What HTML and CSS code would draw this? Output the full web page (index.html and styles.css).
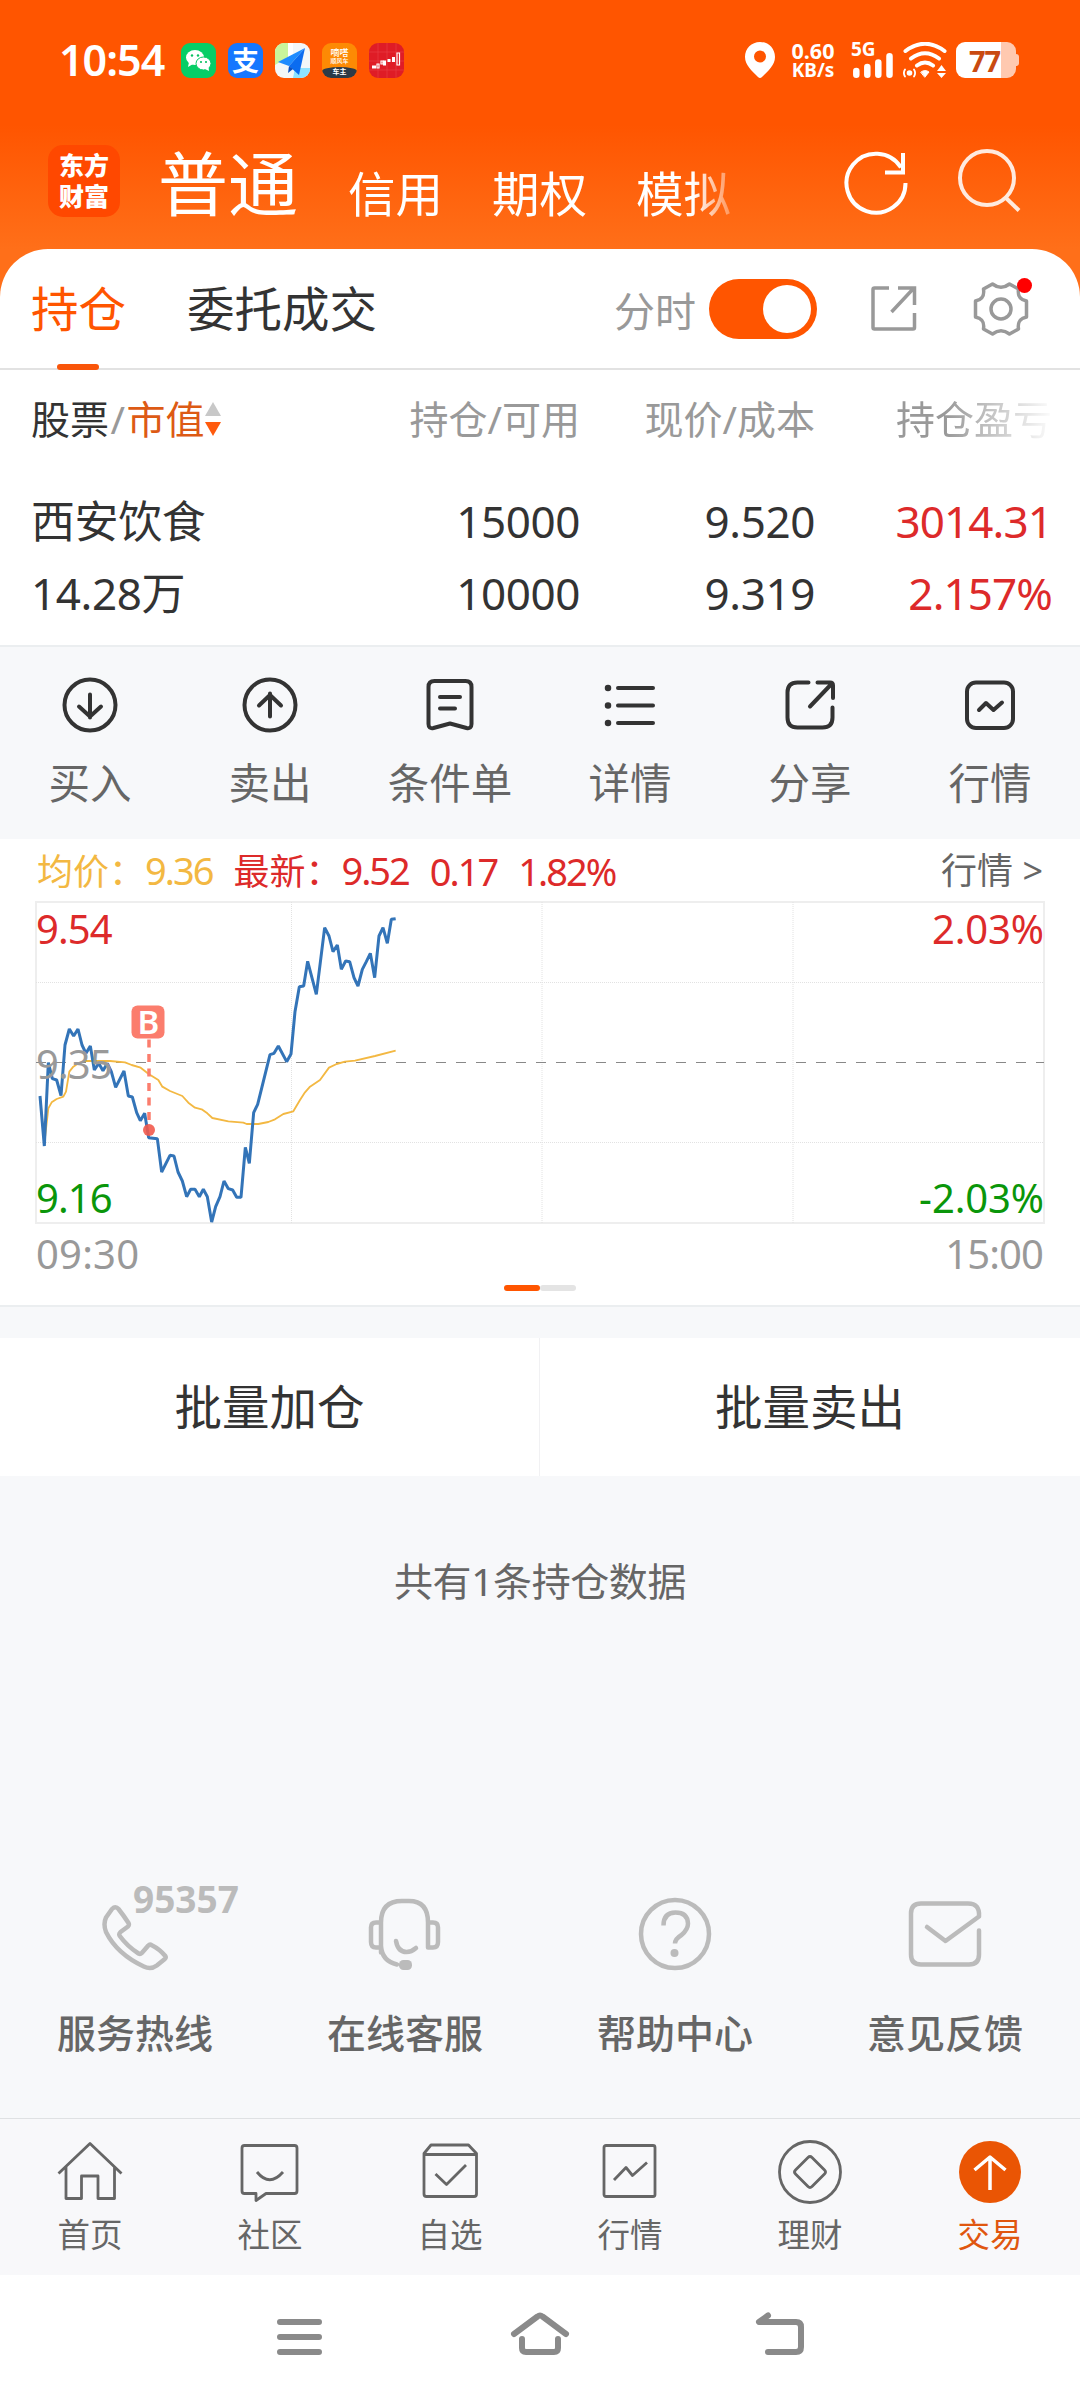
FILE: index.html
```html
<!DOCTYPE html>
<html lang="zh-CN">
<head>
<meta charset="utf-8">
<title>持仓</title>
<link rel="stylesheet" href="styles.css">
</head>
<body>
<div class="screen">
  <div class="status">
    <div class="status-left">
      <span class="clock">10:54</span>
      <span class="app app-wechat"><svg width="35" height="35" viewBox="0 0 35 35"><ellipse cx="14" cy="14.500" rx="9" ry="7.500" fill="#fff"/><path d="M8 19l-1 5 5-3z" fill="#fff"/><circle cx="11" cy="12.500" r="1.200" fill="#07c160"/><circle cx="17" cy="12.500" r="1.200" fill="#07c160"/><ellipse cx="22.500" cy="20.500" rx="7.500" ry="6.500" fill="#fff" stroke="#0acb66"/><path d="M24 26l4 2-.500-4z" fill="#fff"/><circle cx="20" cy="19" r="1.100" fill="#07c160"/><circle cx="25" cy="19" r="1.100" fill="#07c160"/></svg></span>
      <span class="app app-pay">支</span>
      <span class="app app-map"><svg width="35" height="35" viewBox="0 0 35 35"><path d="M0 0h13v14L0 22z" fill="#c9f59b"/><path d="M13 0h5v12l-5 6z" fill="#fff"/><path d="M20 25h15v10H18z" fill="#8fe3ff"/><path d="M30 5L3 19l11 4z" fill="#1d8bff"/><path d="M30 5L14 23l10 9z" fill="#0b6cf0"/><path d="M14 23l-1 7 5-4z" fill="#0a50c0"/></svg></span>
      <span class="app app-ride"><b>嘀嗒</b><b>顺风车</b><i>车主</i></span>
      <span class="app app-stock"><svg width="35" height="35" viewBox="0 0 35 35"><path d="M0 9h35M0 18h35M0 27h35M9 0v35M18 0v35M27 0v35" stroke="#e8474c" stroke-width=".5"/><path d="M3 24h4M15.500 17.500v5M20 16v3M24.500 14v5" stroke="#fff" stroke-width="3"/><path d="M8 21h2v4H8zM12 18h2v3h-2zM28 10h2.500v12H28z" fill="none" stroke="#fff" stroke-width="1.200"/></svg></span>
    </div>
    <div class="status-right">
      <svg class="pin" width="30" height="36" viewBox="0 0 30 36"><path fill="#fff" fill-rule="evenodd" d="M15 0C6.500 0 0 6.500 0 15c0 8 7 14 13 20q2 2 4 0c6-6 13-12 13-20C30 6.500 23.500 0 15 0zm0 8.500a6 6 0 110 12 6 6 0 010-12z"/></svg>
      <span class="speed"><b>0.60</b><b>KB/s</b></span>
      <span class="signal"><b>5G</b><svg width="40" height="25" viewBox="0 0 40 25" stroke="#fff" stroke-width="6.500" stroke-linecap="round"><path d="M3.300 18v3.700M14.300 14v7.700M25.300 9.500v12.200M36.500 3.300v18.400"/></svg></span>
      <svg class="wifi" width="44" height="36" viewBox="0 0 44 36" fill="none" stroke="#fff" stroke-width="4" stroke-linecap="round"><path d="M2.500 9Q22-5.500 41.500 9M8 16.500Q22 6 36 16.500M14 23.500q8-6 16 0"/><path d="M18 30q4-3 8 0l-4 5z" fill="#fff" stroke-width="1"/><circle cx="6.500" cy="31" r="2.800" fill="#fff" stroke="none"/><path d="M2 27.500q-2.200 3.500 0 7M11 27.500q2.200 3.500 0 7" stroke-width="1.800"/><path d="M34 29h9l-4.500-6zM34 31h9l-4.500 5z" fill="#fff" stroke="none"/></svg>
      <span class="battery"><b>77</b></span>
    </div>
  </div>

  <header class="head">
    <div class="logo"><span>东方</span><span>财富</span></div>
    <nav class="modes"><span class="mode-on">普通</span><span>信用</span><span>期权</span><span>模拟</span></nav>
    <svg class="refresh" width="64" height="68" viewBox="0 0 64 68" fill="none" stroke="#fff" stroke-width="4"><path d="M61.500 36A29.500 29.500 0 1 1 57 20.500"/><path d="M59 6v19.500H41"/></svg>
    <svg width="66" height="68" viewBox="0 0 66 68" fill="none" stroke="#ffeade" stroke-width="4"><circle cx="31" cy="31" r="27"/><path d="M49 50l14 13.500"/></svg>
  </header>

  <section class="panel-tabs">
    <span class="ptab ptab-on">持仓</span>
    <span class="ptab">委托成交</span>
    <span class="spark-label">分时</span>
    <span class="toggle"></span>
    <svg class="share" width="48" height="48" viewBox="0 0 48 48" fill="none" stroke="#999" stroke-width="3.500"><path d="M19 3H4.500Q3 3 3 4.500v38Q3 44 4.500 44H43q1.500 0 1.500-1.500V28"/><path d="M28 3h16.500v17M43 4L21.500 27"/></svg>
    <span class="gear"><svg width="56" height="56" viewBox="0 0 56 56" fill="none" stroke="#999" stroke-width="3.500" stroke-linejoin="round"><path d="M19.500 3L10.500 8C11.500 15 9.500 18.500 2.500 20v16C9.500 37.500 11.500 41 10.500 48l9 5Q28 46.500 36.500 53l9-5C44.500 41 46.500 37.500 53.500 36V20C46.500 18.500 44.500 15 45.500 8l-9-5Q28 9.500 19.500 3z"/><circle cx="28" cy="28" r="10"/></svg></span>
  </section>

  <section class="table">
    <div class="thead">
      <span class="c1"><em>股票</em><u>/</u><strong>市值</strong><svg width="16" height="34" viewBox="0 0 16 34"><path d="M8 0l8 14H0z" fill="#c8c8c8"/><path d="M8 34l8-14H0z" fill="#ff5a0d"/></svg></span>
      <span>持仓/可用</span><span>现价/成本</span><span class="fade">持仓盈亏</span>
    </div>
    <div class="trow"><span class="c1">西安饮食</span><span>15000</span><span>9.520</span><span class="red">3014.31</span></div>
    <div class="trow"><span class="c1">14.28万</span><span>10000</span><span>9.319</span><span class="red">2.157%</span></div>
  </section>

  <section class="actions">
    <div><svg width="56" height="56" viewBox="0 0 56 56"><circle cx="28" cy="28" r="25.500"/><path d="M28 17.500v23M17 29.500l11 10 11-10"/></svg><span>买入</span></div>
    <div><svg width="56" height="56" viewBox="0 0 56 56"><circle cx="28" cy="28" r="25.500"/><path d="M28 39.500v-23M17 28.500l11-10.500 11 10.500"/></svg><span>卖出</span></div>
    <div><svg width="56" height="56" viewBox="0 0 56 56"><path d="M12.500 4h31q6 0 6 6v37q0 5-5 4L28 46.500 11.500 51q-5 1-5-4V10q0-6 6-6z"/><path d="M18 20h20M18 31.500h15"/></svg><span>条件单</span></div>
    <div><svg width="56" height="56" viewBox="0 0 56 56"><path d="M16 11h35M16 28.500h35M16 46h35"/><path d="M6 11h.01M6 28.500h.01M6 46h.01" stroke-width="6.500"/></svg><span>详情</span></div>
    <div><svg width="56" height="56" viewBox="0 0 56 56"><path d="M26.500 5.500H15.500q-10 0-10 10v25q0 10 10 10h25q10 0 10-10V30.500"/><path d="M35.500 5.500H48q3 0 3 3V21M49 7.500L28 29.500"/></svg><span>分享</span></div>
    <div><svg width="56" height="56" viewBox="0 0 56 56"><rect x="5" y="5.500" width="46" height="45.500" rx="9"/><path d="M17 33l7-7 7.500 7 8.500-7.500"/></svg><span>行情</span></div>
  </section>

  <section class="quote">
    <div class="quote-info">
      <span class="gold">均价：<b>9.36</b></span><span class="red">最新：<b>9.52</b></span><b class="red">0.17</b><b class="red">1.82%</b><span class="more">行情 &gt;</span>
    </div>
    <svg class="chart" width="1010" height="382" viewBox="-1 -1 1010 382">
      <g fill="none">
        <path class="frame" d="M0 0H1008V321H0z"/>
        <path class="dots" d="M0 80.500H1008M0 240.500H1008M255.500 0V321M506 0V321M757 0V321"/>
        <path class="mid" d="M0 160.500H1008"/>
        <g transform="translate(-36 -22) scale(.33333)">
          <polyline class="avg" points="120,648 133,790 145,685 155,667 170,657 190,650 198,635 208,575 220,560 235,550 250,543 330,543 375,547 395,555 422,563 446,582 475,600 487,620 510,633 547,648 565,668 585,683 605,688 622,700 637,714 685,724 730,728 740,732 775,732 805,726 825,718 850,702 880,694 900,660 915,637 930,620 960,600 987,563 1010,552 1035,545 1065,542 1125,528 1187,512"/>
          <polyline class="price" points="120,648 133,798 145,548 157,596 170,600 183,647 195,495 208,447 221,468 234,447 246,495 258,520 271,498 283,570 296,550 309,572 322,550 334,575 347,622 372,573 385,648 397,651 410,698 421,722 434,700 446,773 472,776 485,876 510,826 522,828 534,876 547,903 560,950 572,928 585,928 598,950 610,928 622,950 635,1026 647,980 660,950 672,903 685,926 698,930 710,952 723,952 736,802 748,850 761,698 773,673 810,524 822,520 835,498 860,545 873,522 885,395 898,320 911,318 923,244 949,343 974,143 987,168 999,215 1012,195 1024,268 1037,243 1049,245 1062,293 1074,318 1087,268 1099,245 1111,220 1124,293 1137,168 1149,143 1162,190 1174,118 1187,116"/>
        </g>
        <path d="M113 137.500V222" stroke="#fb7d6d" stroke-width="3.500" stroke-dasharray="8 6.500"/>
      </g>
      <circle cx="113" cy="228" r="6" fill="#f25a4c" fill-opacity=".9"/>
      <rect x="95.500" y="103.500" width="33" height="33" rx="6" fill="#fb7d6d"/>
      <text class="buy" x="112" y="131.500" text-anchor="middle">B</text>
      <text class="t-red" x="0" y="41.500">9.54</text>
      <text class="t-gray" x="0" y="176.500">9.35</text>
      <text class="t-green" x="0" y="310.500">9.16</text>
      <text class="t-gray time" x="0" y="367">09:30</text>
      <text class="t-red pct" x="1008" y="41.500" text-anchor="end">2.03%</text>
      <text class="t-green pct" x="1008" y="310.500" text-anchor="end">-2.03%</text>
      <text class="t-gray" x="1007" y="367" text-anchor="end">15:00</text>
    </svg>
    <div class="pager"><i></i><i></i></div>
  </section>

  <section class="batch"><span>批量加仓</span><span>批量卖出</span></section>
  <p class="count">共有1条持仓数据</p>

  <section class="services">
    <div><span class="icon-wrap"><svg width="72" height="76" viewBox="0 0 72 76"><path d="M13 13q3.500-3.500 6.500 0Q25 20 29.500 27q1 2-.5 3.500L21.500 36q-2 2-.7 4Q28 50 39.500 57.500q1.800 1 3.300-.5l6.500-7.500q1.500-1.500 3.500-.3 8 4 13.500 10.800 1 1.500-.5 3l-8 6.500q-6 4.500-13 1Q18 58 7 36 4 28 7 21.500z"/></svg><b class="hotline">95357</b></span><span>服务热线</span></div>
    <div><svg width="76" height="76" viewBox="0 0 76 76"><path d="M14 56.500V26.500q0-21.500 21-21.500h7q19 0 19 21.500v25M14 26.500H9q-5 0-5 5V46q0 5.500 5 5.500h5M61 26.500h5q5 0 5 5V46q0 5.500-5 5.500h-5M14 50q1 15 16 18.500"/><path d="M29 45Q31 56 39.500 56q5 0 9.500-4"/><rect x="32" y="64" width="13" height="10" rx="4.500" fill="#bbb" stroke="none"/></svg><span>在线客服</span></div>
    <div><svg width="76" height="76" viewBox="0 0 76 76"><circle cx="38" cy="38" r="34"/><path d="M26.500 29.500Q26.500 16.500 38.500 16.500q12 0 12.500 11 0 6-6.500 11.500Q38 43 38 47.500" stroke-linecap="butt"/><circle cx="37.500" cy="57" r="4" fill="#bbb" stroke="none"/></svg><span>帮助中心</span></div>
    <div><svg width="76" height="76" viewBox="0 0 76 76"><path d="M20 31l18.500 14L72 20.500Q73 7.500 61 7.500H14q-10 0-10 10v41q0 10 10 10h48q10 0 10-10V34.500"/></svg><span>意见反馈</span></div>
  </section>

  <nav class="tabbar">
    <div><svg width="66" height="66" viewBox="0 0 66 66"><path d="M1.500 34.500L33 4.500l31.500 30M9 28v31.500h15.500V37H41v22.500h16.500V28"/></svg><span>首页</span></div>
    <div><svg width="66" height="66" viewBox="0 0 66 66"><path d="M7.500 6.500h50q2.500 0 2.500 2.500v43q0 2.500-2.500 2.500H29l-10 7V54.500H7.500Q5 54.500 5 52V9q0-2.500 2.500-2.500z"/><path d="M20 33q12.500 15.500 26 0"/></svg><span>社区</span></div>
    <div><svg width="66" height="66" viewBox="0 0 66 66"><path d="M7 14.500L14 6h37.500l8 8.500V55q0 2.500-2.500 2.500H9.500Q7 57.500 7 55zM7 15.500h52.500M18.500 35L29.500 45.500 49 26"/></svg><span>自选</span></div>
    <div><svg width="66" height="66" viewBox="0 0 66 66"><rect x="7" y="6.500" width="51" height="51" rx="2"/><path d="M17 41l12-12.500 6.500 8L50 23.500"/></svg><span>行情</span></div>
    <div><svg width="66" height="66" viewBox="0 0 66 66"><circle cx="33" cy="33" r="30.500"/><path d="M31 18.500q2-2 4 0l12.500 12.500q2 2 0 4L35 47.500q-2 2-4 0L18.500 35q-2-2 0-4z"/></svg><span>理财</span></div>
    <div class="tab-on"><svg width="66" height="66" viewBox="0 0 66 66"><circle cx="33" cy="33" r="31" fill="#ea5504" stroke="none"/><path d="M33 51V18M17.500 31L33 18l15.500 13" stroke="#fff" stroke-width="3.500"/></svg><span>交易</span></div>
  </nav>

  <div class="sysnav">
    <svg width="60" height="54" viewBox="0 0 60 54"><path d="M10 12h39M10 27h39M10 42h39"/></svg>
    <svg width="60" height="54" viewBox="0 0 60 54"><path d="M4 24L27.500 6.500q2.500-2 5 0L56 24M12 29v9q0 4 4 4h28q4 0 4-4v-9"/></svg>
    <svg width="60" height="54" viewBox="0 0 60 54"><path d="M18 5.500L9 12H46q5 0 5 5v20q0 5-5 5H18"/></svg>
  </div>
</div>
</body>
</html>
```
FILE: styles.css
```css
* { box-sizing: border-box; }
body {
  margin: 0;
  font-family: "Noto Sans", "Noto Sans CJK SC", sans-serif;
  color: #333;
}
em, i { font-style: normal; }
svg { display: block; flex: none; }
.screen {
  width: 1080px;
  height: 2400px;
  overflow: hidden;
  display: flex;
  flex-direction: column;
  background: linear-gradient(#ff5500 125px, #ff6f19 249px) top / 100% 310px no-repeat #f7f8fa;
}
.screen > * { flex: none; }

/* system status bar */
.status {
  height: 120px;
  padding: 0 64px 0 59px;
  display: flex;
  align-items: center;
  justify-content: space-between;
  color: #fff;
}
.status-left { display: flex; align-items: center; gap: 12px; }
.clock { font-size: 43px; font-weight: 600; line-height: 50px; letter-spacing: -1px; width: 110px; }
.app {
  width: 35px; height: 35px;
  border-radius: 9px;
  overflow: hidden;
  display: flex; flex-direction: column; align-items: center; justify-content: center;
}
.app-wechat { background: #06ce66; }
.app-pay { background: #1677ff; font-size: 27px; font-weight: 700; line-height: 35px; }
.app-map { background: #f3f7f8; }
.app-ride { background: #fd8a04; justify-content: flex-start; padding-top: 5px; }
.app-ride b { font-size: 9px; line-height: 9px; font-weight: 500; }
.app-ride b + b { font-size: 6px; }
.app-ride i { background: #2d3a47; width: 35px; height: 12px; border-radius: 50% 50% 0 0 / 4px; font-size: 7px; line-height: 10px; font-weight: 700; text-align: center; margin-top: 1px; }
.app-stock { background: #df1c26; }
.status-right { display: flex; align-items: center; height: 36px; }
.speed { display: flex; flex-direction: column; width: 48px; margin-left: 14px; text-align: center; }
.speed b { font-size: 21.500px; line-height: 20px; }
.speed b + b { font-size: 19px; line-height: 18px; }
.signal { display: flex; flex-direction: column; margin-left: 14px; width: 43px; height: 36px; }
.signal b { font-size: 19px; line-height: 14px; height: 11px; }
.signal svg { margin-left: 2px; }
.wifi { margin-left: 9px; }
.battery {
  position: relative;
  margin-left: 9px;
  width: 60px; height: 36px;
  border-radius: 9px;
  background: linear-gradient(90deg, #fff 45px, #ffc9b0 45px);
  color: #c94a10;
}
.battery b { display: block; font-size: 29px; line-height: 37px; letter-spacing: -1px; margin-left: 13px; }
.battery::after { content: ""; position: absolute; left: 60px; top: 12px; width: 3px; height: 12px; border-radius: 0 3px 3px 0; background: #ffc9b0; }

/* app header */
.head {
  height: 129px;
  padding: 0 58px 7px 48px;
  display: flex;
  align-items: center;
  color: #fff;
}
.logo {
  width: 72px; height: 72px;
  border-radius: 15px;
  background: #ff4800;
  display: flex; flex-direction: column; align-items: center; justify-content: center;
  font-size: 25px; font-weight: 900; line-height: 31px;
}
.modes {
  display: flex;
  align-items: flex-start;
  width: 590px;
  height: 90px;
  margin-left: 38px;
  font-size: 47.500px;
  line-height: 90px;
  -webkit-mask-image: linear-gradient(90deg, #000 535px, transparent 590px);
  mask-image: linear-gradient(90deg, #000 535px, transparent 590px);
}
.modes span { width: 144px; flex: none; margin-top: 13px; }
.modes .mode-on { font-size: 70px; width: 190px; margin-top: 3px; }
.refresh { margin-left: auto; margin-right: 48px; }

/* panel tabs */
.panel-tabs {
  height: 121px;
  padding: 0 51px 0 31px;
  display: flex;
  align-items: center;
  background: #fff;
  border-bottom: 2px solid #e2e2e2;
  border-radius: 48px 48px 0 0;
}
.ptab { font-size: 47.500px; line-height: 122px; margin-right: 61px; position: relative; }
.ptab-on { color: #ff5500; }
.ptab-on::after { content: ""; position: absolute; left: 26px; bottom: 0; width: 42px; height: 6px; border-radius: 3px; background: #f9550a; }
.spark-label { margin-left: auto; font-size: 41px; color: #999; }
.toggle { width: 108px; height: 60px; border-radius: 30px; background: #ff5500; margin-left: 13px; padding: 6px; }
.toggle::after { content: ""; display: block; width: 48px; height: 48px; border-radius: 50%; background: #fff; margin-left: 48px; }
.share { margin-left: 53px; }
.gear { position: relative; margin-left: 55px; }
.gear::after { content: ""; position: absolute; right: -3px; top: -3px; width: 15px; height: 15px; border-radius: 50%; background: #f00; }

/* holdings table */
.table { background: #fff; height: 277px; border-bottom: 2px solid #ebeef0; padding-top: 14px; }
.thead, .trow {
  display: grid;
  grid-template-columns: 300px 249px 235px 237px;
  padding: 0 28px 0 31px;
  text-align: right;
}
.c1 { text-align: left; }
.thead { font-size: 39px; line-height: 70px; color: #999; height: 101px; }
.thead .c1 { display: flex; align-items: center; height: 70px; }
.thead em { color: #333; }
.thead u { text-decoration: none; width: 17.500px; text-align: center; }
.thead strong { color: #dd5a14; font-weight: 400; }
.fade { -webkit-mask-image: linear-gradient(90deg, #000 130px, transparent 240px); mask-image: linear-gradient(90deg, #000 130px, transparent 240px); }
.trow { font-size: 44px; line-height: 72px; letter-spacing: -.400px; }
.trow .red { letter-spacing: -.900px; }
.red { color: #dd2a2a; }

/* stock actions */
.actions { height: 192px; display: grid; grid-template-columns: repeat(6, 1fr); padding-top: 30px; background: #f7f8fa; }
.actions div { display: flex; flex-direction: column; align-items: center; }
.actions svg { fill: none; stroke: #333; stroke-width: 4; stroke-linecap: round; stroke-linejoin: round; }
.actions span { font-size: 41.500px; line-height: 50px; margin-top: 25px; color: #666; }

/* intraday quote */
.quote { height: 468px; background: #fff; padding: 0 35px; border-bottom: 2px solid #ebeef0; }
.quote-info { display: flex; align-items: center; gap: 21px; height: 62px; padding: 2px 2px 0; font-size: 36px; line-height: 60px; }
.quote-info b { font-weight: 400; font-size: 38px; letter-spacing: -2px; }
.gold { color: #f3b842; }
.more { margin-left: auto; color: #666; }
.frame { stroke: #eee; stroke-width: 2; }
.dots { stroke: #e2e2e2; stroke-width: 1; stroke-dasharray: 1 1; }
.mid { stroke: #888; stroke-width: 1.200; stroke-dasharray: 10 10; }
.avg { stroke: #f3b842; stroke-width: 5.500; stroke-linejoin: round; }
.price { stroke: #3374b8; stroke-width: 9; stroke-linejoin: bevel; }
.chart { overflow: visible; }
.chart text { font-size: 40px; letter-spacing: -.900px; }
.chart .time { letter-spacing: .200px; }
.chart .pct { letter-spacing: -.100px; }
.chart .t-red { fill: #dd2a2a; }
.chart .t-gray { fill: #999; }
.chart .t-green { fill: #0a960a; }
.chart .buy { font-size: 33px; font-weight: 600; fill: #fff; }
.pager { display: flex; justify-content: center; margin-top: 2px; }
.pager i { width: 36px; height: 6px; border-radius: 3px; background: #e4e4e4; }
.pager i:first-child { background: #ff5500; }

.batch { height: 138px; margin-top: 31px; display: grid; grid-template-columns: 1fr 1fr; background: #fff; }
.batch span { text-align: center; font-size: 47.500px; line-height: 138px; }
.batch span:first-child { border-right: 1px solid #f1f1f3; }
.count { margin: 75px 0 0; text-align: center; font-size: 39px; line-height: 60px; color: #666; letter-spacing: -.400px; }

/* support links */
.services { display: grid; grid-template-columns: repeat(4, 1fr); margin-top: 285px; height: 222px; }
.services div { display: flex; flex-direction: column; align-items: center; font-size: 39px; font-weight: 500; line-height: 60px; color: #666; }
.services svg { fill: none; stroke: #bbb; stroke-width: 4.500; stroke-linecap: round; stroke-linejoin: round; }
.services div > :last-child { margin-top: 31px; }
.icon-wrap { position: relative; }
.hotline { position: absolute; left: 34px; top: -16px; font-size: 37px; line-height: 37px; font-weight: 700; color: #bbb; }

/* app tab bar */
.tabbar { height: 157px; border-top: 1px solid #dfe1e3; background: #f8f8fa; display: grid; grid-template-columns: repeat(6, 1fr); padding-top: 20px; }
.tabbar div { display: flex; flex-direction: column; align-items: center; font-size: 32.500px; line-height: 40px; color: #666; }
.tabbar svg { fill: none; stroke: #666; stroke-width: 2.800; stroke-linejoin: round; }
.tabbar span { margin-top: 10px; }
.tabbar .tab-on { color: #e0560f; }

.sysnav { flex: 1; background: #fff; display: flex; justify-content: center; gap: 180px; padding-top: 35px; }
.sysnav svg { fill: none; stroke: #8a8a8a; stroke-width: 6; stroke-linecap: round; stroke-linejoin: round; }
```
